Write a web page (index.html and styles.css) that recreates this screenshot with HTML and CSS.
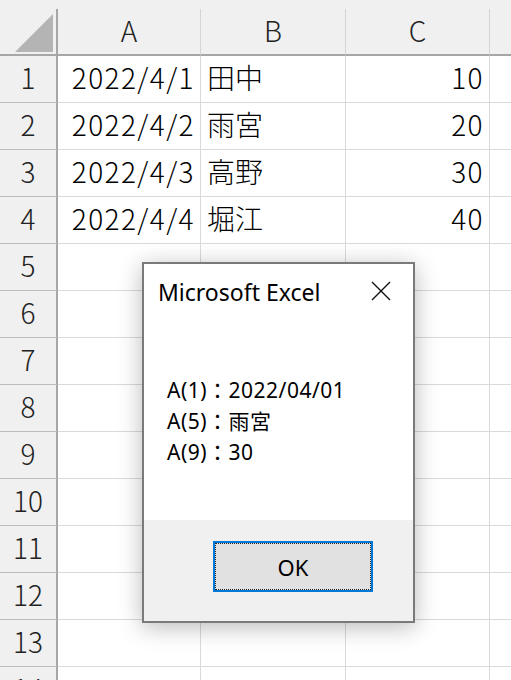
FILE: index.html
```html
<!DOCTYPE html>
<html lang="ja">
<head>
  <meta charset="UTF-8" />
  <title>Microsoft Excel</title>
  <link rel="stylesheet" href="styles.css">
</head>
<body>

  <div class="sheet">
    <div class="top_strip"></div>
    <div class="grid">
      <div class="corner"><span class="corner_tri"></span></div>
      <div class="col_head">A</div>
      <div class="col_head">B</div>
      <div class="col_head">C</div>
      <div class="col_head"></div>

      <div class="row_head">1</div>
      <div class="cell num">2022/4/1</div>
      <div class="cell">田中</div>
      <div class="cell num">10</div>
      <div class="cell"></div>

      <div class="row_head">2</div>
      <div class="cell num">2022/4/2</div>
      <div class="cell">雨宮</div>
      <div class="cell num">20</div>
      <div class="cell"></div>

      <div class="row_head">3</div>
      <div class="cell num">2022/4/3</div>
      <div class="cell">高野</div>
      <div class="cell num">30</div>
      <div class="cell"></div>

      <div class="row_head">4</div>
      <div class="cell num">2022/4/4</div>
      <div class="cell">堀江</div>
      <div class="cell num">40</div>
      <div class="cell"></div>

      <div class="row_head">5</div><div class="cell"></div><div class="cell"></div><div class="cell"></div><div class="cell"></div>
      <div class="row_head">6</div><div class="cell"></div><div class="cell"></div><div class="cell"></div><div class="cell"></div>
      <div class="row_head">7</div><div class="cell"></div><div class="cell"></div><div class="cell"></div><div class="cell"></div>
      <div class="row_head">8</div><div class="cell"></div><div class="cell"></div><div class="cell"></div><div class="cell"></div>
      <div class="row_head">9</div><div class="cell"></div><div class="cell"></div><div class="cell"></div><div class="cell"></div>
      <div class="row_head">10</div><div class="cell"></div><div class="cell"></div><div class="cell"></div><div class="cell"></div>
      <div class="row_head">11</div><div class="cell"></div><div class="cell"></div><div class="cell"></div><div class="cell"></div>
      <div class="row_head">12</div><div class="cell"></div><div class="cell"></div><div class="cell"></div><div class="cell"></div>
      <div class="row_head">13</div><div class="cell"></div><div class="cell"></div><div class="cell"></div><div class="cell"></div>
      <div class="row_head">14</div><div class="cell"></div><div class="cell"></div><div class="cell"></div><div class="cell"></div>
    </div>
  </div>

  <!-- MsgBox popup, sits over the grid -->
  <div class="msgbox">
    <div class="msg_body">
      <div class="msg_title">
        <span>Microsoft Excel</span>
        <svg class="close_x" width="20" height="20" viewBox="0 0 20 20">
          <path d="M1 1 L19 19 M19 1 L1 19" stroke="#111" stroke-width="1.4" fill="none" />
        </svg>
      </div>
      <div class="msg_text">
        <div>A(1)：2022/04/01</div>
        <div>A(5)：雨宮</div>
        <div>A(9)：30</div>
      </div>
    </div>
    <div class="msg_footer">
      <button class="ok_button"><span class="focus_rect">OK</span></button>
    </div>
  </div>

</body>
</html>
```

FILE: styles.css
```css
body {
  margin: 0;
  padding: 0;
  background-color: white;
  font-family: "Noto Sans CJK JP", sans-serif;
  overflow: hidden;
}

.sheet {
  width: 511px;
  height: 680px;
  overflow: hidden;
}

.top_strip {
  height: 9px;
  background-color: #f0f0f0;
}

.grid {
  display: grid;
  grid-template-columns: 58px 143px 145px 144px 60px;
  grid-template-rows: 47px repeat(14, 47px);
  font-weight: 300;
}

.corner {
  background-color: #f0f0f0;
  border-right: 2px solid #a6a6a6;
  border-bottom: 2px solid #a6a6a6;
  box-sizing: border-box;
  position: relative;
}

.corner_tri {
  position: absolute;
  right: 3px;
  bottom: 2px;
  width: 38px;
  height: 38px;
  background-color: #b4b4b4;
  clip-path: polygon(100% 0, 100% 100%, 0 100%);
}

.col_head {
  background-color: #f0f0f0;
  border-right: 1px solid #d4d4d4;
  border-bottom: 2px solid #a6a6a6;
  box-sizing: border-box;
  display: flex;
  align-items: center;
  justify-content: center;
  padding-bottom: 4px;
  font-size: 28px;
  color: #222;
}

.row_head {
  background-color: #f0f0f0;
  border-right: 2px solid #a6a6a6;
  border-bottom: 1px solid #bdbdbd;
  box-sizing: border-box;
  display: flex;
  align-items: center;
  justify-content: center;
  padding-bottom: 4px;
  font-size: 28px;
  color: #222;
}

.cell {
  border-right: 1px solid #dadada;
  border-bottom: 1px solid #dadada;
  box-sizing: border-box;
  display: flex;
  align-items: center;
  padding: 0 5px 4px 6px;
  font-size: 28px;
  color: black;
  white-space: nowrap;
}

.num {
  justify-content: flex-end;
  letter-spacing: 1.4px;
}

.msgbox {
  position: absolute;
  left: 142px;
  top: 262px;
  width: 273px;
  height: 361px;
  box-sizing: border-box;
  border: 2px solid #7a7a7a;
  background: white;
  box-shadow: 0 4px 22px rgba(0,0,0,0.28);
  display: flex;
  flex-direction: column;
  font-family: "Noto Sans", "Noto Sans CJK JP", sans-serif;
}

.msg_body {
  flex: 1;
  padding: 0 0 0 14px;
}

.msg_title {
  display: flex;
  justify-content: space-between;
  align-items: center;
  height: 56px;
  padding-right: 22px;
  font-size: 23px;
  color: black;
}

.close_x {
  display: block;
  margin-top: -3px;
}

.msg_text {
  margin-top: 55px;
  padding-left: 9px;
  font-size: 21px;
  letter-spacing: 0.5px;
  line-height: 31px;
  color: black;
}

.msg_footer {
  height: 101px;
  background-color: #f0f0f0;
  display: flex;
  justify-content: center;
  padding-top: 21px;
  box-sizing: border-box;
  padding-left: 29px;
}

.ok_button {
  width: 160px;
  height: 51px;
  padding: 0;
  border: 2px solid #0078d7;
  background-color: #e1e1e1;
  font-family: "Noto Sans", sans-serif;
  font-size: 22px;
  color: black;
  cursor: pointer;
}

.focus_rect {
  display: flex;
  align-items: center;
  justify-content: center;
  height: 100%;
  box-sizing: border-box;
  border: 1px dotted #222;
}
```
